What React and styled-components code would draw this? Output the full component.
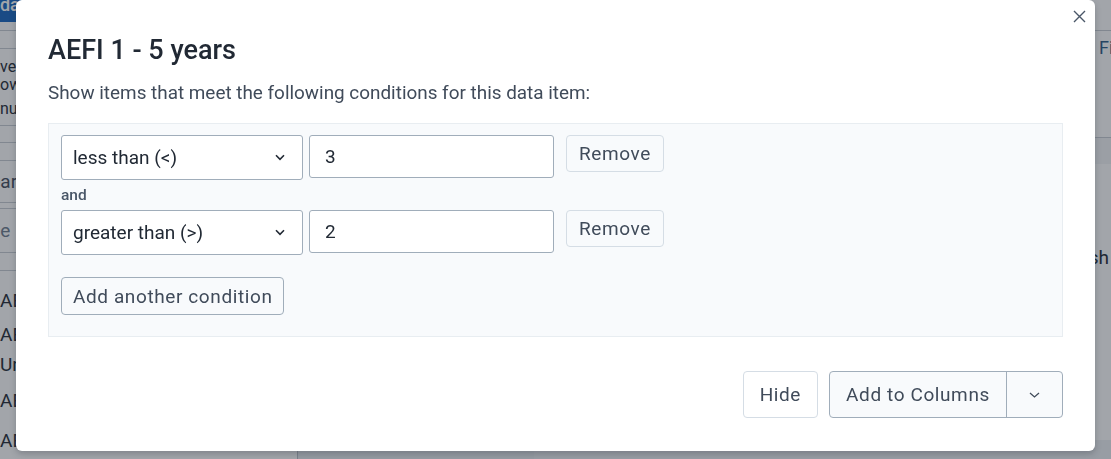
import React from "react";
import styled, { createGlobalStyle } from "styled-components";

const GlobalStyle = createGlobalStyle`
  html, body { margin: 0; padding: 0; }
  body {
    font-family: Roboto, "Noto Sans", "Liberation Sans", sans-serif;
    width: 1111px;
    height: 459px;
    overflow: hidden;
    background: #ffffff;
  }
  * { box-sizing: border-box; }
`;

/* ---------- background page ---------- */
const Page = styled.div`
  display: flex;
  width: 1111px;
  height: 459px;
  overflow: hidden;
  background: #ffffff;
  color: #212934;
`;

const Sidebar = styled.aside`
  width: 298px;
  flex-shrink: 0;
  display: flex;
  flex-direction: column;
  border-right: 1px solid #b9c0c8;
  background: #ffffff;
  overflow: hidden;
`;

const UpdateBar = styled.div`
  height: 22px;
  flex-shrink: 0;
  background: #1565c0;
  color: #ffffff;
  overflow: hidden;
  white-space: nowrap;
`;

const UpdateLabel = styled.span`
  display: block;
  margin-top: -4px;
  font-size: 18px;
  line-height: 18px;
  font-weight: 500;
  text-indent: -22px;
`;

const Band = styled.div`
  height: ${(p) => p.$h}px;
  flex-shrink: 0;
  border-bottom: 1px solid #c6ccd3;
  background: ${(p) => p.$bg || "#ffffff"};
  display: flex;
  align-items: center;
  white-space: nowrap;
  overflow: hidden;
  font-size: 19px;
  color: ${(p) => p.$color || "#212934"};
  text-indent: ${(p) => p.$indent || 0}px;
`;

const TextBlock = styled.div`
  height: 77px;
  flex-shrink: 0;
  border-bottom: 1px solid #c6ccd3;
  padding-top: 9px;
  font-size: 16px;
  line-height: 18px;
  white-space: nowrap;
  overflow: hidden;
`;

const TextLine = styled.div`
  margin-top: ${(p) => p.$gap || 0}px;
`;

const List = styled.div`
  padding-top: 17px;
  display: flex;
  flex-direction: column;
  font-size: 19px;
  white-space: nowrap;
`;

const ListItem = styled.div`
  margin-top: ${(p) => p.$gap || 0}px;
  line-height: ${(p) => p.$lh || 26}px;
`;

const MidColumn = styled.div`
  width: 236px;
  flex-shrink: 0;
  background: #e9edf1;
`;

const RightColumn = styled.div`
  flex: 1;
  display: flex;
  flex-direction: column;
  background: #ffffff;
  min-width: 0;
`;

const Toolbar = styled.div`
  height: ${(p) => p.$h}px;
  flex-shrink: 0;
  display: flex;
  justify-content: flex-end;
  align-items: ${(p) => p.$align || "flex-start"};
  border-bottom: ${(p) => (p.$border ? "1px solid #c6ccd3" : "none")};
  background: ${(p) => p.$bg || "#ffffff"};
  padding: ${(p) => p.$pad || "0"};
`;

const ToolLabel = styled.span`
  width: 12px;
  overflow: hidden;
  white-space: nowrap;
  font-size: 18px;
  color: #2b5a86;
`;

const Message = styled.span`
  white-space: nowrap;
  font-size: 19px;
  color: #212934;
  padding-right: 2px;
`;

const Spacer = styled.div`
  flex: 1;
  background: #ffffff;
`;

const BottomBand = styled.div`
  height: 19px;
  flex-shrink: 0;
  background: #eef1f4;
`;

/* ---------- modal ---------- */
const Overlay = styled.div`
  position: fixed;
  inset: 0;
  background: rgba(33, 41, 52, 0.42);
  display: flex;
  align-items: flex-start;
  padding-left: 16px;
`;

const Modal = styled.div`
  position: relative;
  width: 1079px;
  background: #ffffff;
  border-radius: 6px;
  box-shadow: 0 3px 6px rgba(33, 41, 52, 0.25);
  padding: 34px 32px 33px 32px;
  display: flex;
  flex-direction: column;
`;

const CloseButton = styled.button`
  position: absolute;
  top: 10px;
  right: 9px;
  width: 13px;
  height: 13px;
  padding: 0;
  border: none;
  background: transparent;
  display: flex;
`;

const Title = styled.h2`
  margin: 0;
  font-size: 27px;
  line-height: 32px;
  font-weight: 500;
  color: #212934;
`;

const Description = styled.p`
  margin: 15px 0 0 0;
  font-size: 18.9px;
  line-height: 24px;
  color: #404b5a;
`;

const ConditionBox = styled.div`
  margin-top: 18px;
  background: #f8fafc;
  border: 1px solid #e8edf1;
  padding: 11px 12px 21px 12px;
  display: flex;
  flex-direction: column;
  align-items: flex-start;
`;

const ConditionRow = styled.div`
  display: flex;
  align-items: flex-start;
`;

const SelectBox = styled.div`
  width: 242px;
  height: 45px;
  background: #ffffff;
  border: 1px solid #a0adba;
  border-radius: 3px;
  display: flex;
  align-items: center;
  justify-content: space-between;
  padding: 0 17px 0 11px;
  font-size: 19px;
  color: #212934;
`;

const ValueInput = styled.input`
  width: 245px;
  height: 43px;
  margin-left: 6px;
  background: #ffffff;
  border: 1px solid #a0adba;
  border-radius: 3px;
  padding: 0 15px;
  font-family: inherit;
  font-size: 19px;
  color: #212934;
  outline: none;
`;

const Button = styled.button`
  height: ${(p) => p.$h || 37}px;
  padding: 0 ${(p) => p.$px || 12}px;
  margin-left: ${(p) => p.$ml || 0}px;
  margin-top: ${(p) => p.$mt || 0}px;
  background: ${(p) => (p.$white ? "#ffffff" : "#f8fafc")};
  border: 1px solid ${(p) => (p.$strong ? "#a0adba" : "#d5dde5")};
  border-radius: 4px;
  font-family: inherit;
  font-size: 19px;
  letter-spacing: 0.6px;
  color: #404b5a;
  display: inline-flex;
  align-items: center;
  justify-content: center;
  white-space: nowrap;
`;

const AndLabel = styled.div`
  margin: 6px 0;
  height: 18px;
  font-size: 15.5px;
  line-height: 18px;
  font-weight: 500;
  color: #4a5768;
`;

const Footer = styled.div`
  margin-top: 34px;
  display: flex;
  justify-content: flex-end;
  gap: 11px;
`;

const SplitButton = styled.div`
  display: flex;
  height: 47px;
  border: 1px solid #a0adba;
  border-radius: 4px;
  background: #f8fafc;
  overflow: hidden;
`;

const SplitMain = styled.button`
  width: 177px;
  height: 100%;
  border: none;
  border-right: 1px solid #a0adba;
  background: transparent;
  font-family: inherit;
  font-size: 19px;
  letter-spacing: 0.6px;
  color: #404b5a;
  padding: 0;
`;

const SplitArrow = styled.button`
  width: 55px;
  height: 100%;
  border: none;
  background: transparent;
  display: flex;
  align-items: center;
  justify-content: center;
  padding: 0;
`;

const Chevron = () => (
  <svg width="10" height="7" viewBox="0 0 10 7" fill="none">
    <path d="M1 1.3L5 5.3L9 1.3" stroke="#212934" strokeWidth="1.6" />
  </svg>
);

const SmallChevron = () => (
  <svg width="11" height="6" viewBox="0 0 11 6" fill="none">
    <path d="M1 1L5.5 5L10 1" stroke="#404b5a" strokeWidth="1.3" />
  </svg>
);

const CloseIcon = () => (
  <svg width="13" height="13" viewBox="0 0 13 13" fill="none">
    <path d="M1 1L12 12M12 1L1 12" stroke="#4a5768" strokeWidth="1.4" />
  </svg>
);

const conditions = [
  { op: "less than (<)", value: "3" },
  { op: "greater than (>)", value: "2" },
];

export default function App() {
  return (
    <>
      <GlobalStyle />
      <Page>
        <Sidebar>
          <UpdateBar>
            <UpdateLabel>Update</UpdateLabel>
          </UpdateBar>
          <Band $h={9} />
          <Band $h={18} />
          <TextBlock>
            <TextLine>very</TextLine>
            <TextLine>own</TextLine>
            <TextLine $gap={6}>num</TextLine>
          </TextBlock>
          <Band $h={17} />
          <Band $h={18} />
          <Band $h={42} $indent={-21} $color="#404b5a">Search</Band>
          <Band $h={6} />
          <Band $h={44} $indent={-30} $color="#6b7a8c">Type</Band>
          <Band $h={18} />
          <List>
            <ListItem>AEFI</ListItem>
            <ListItem $gap={6} $lh={30}>
              AEFI
              <br />
              Unk
            </ListItem>
            <ListItem $gap={8}>AEFI</ListItem>
            <ListItem $gap={14}>AEFI</ListItem>
          </List>
        </Sidebar>
        <MidColumn />
        <RightColumn>
          <Toolbar $h={31} $border />
          <Toolbar $h={107} $border $pad="6px 0 0 0">
            <ToolLabel>Fields</ToolLabel>
          </Toolbar>
          <Toolbar $h={26} $bg="#f3f5f7" />
          <Toolbar $h={186} $align="center">
            <Message>refresh</Message>
          </Toolbar>
          <Spacer />
          <BottomBand />
        </RightColumn>
      </Page>

      <Overlay>
        <Modal>
          <CloseButton aria-label="Close">
            <CloseIcon />
          </CloseButton>
          <Title>AEFI 1 - 5 years</Title>
          <Description>
            Show items that meet the following conditions for this data item:
          </Description>
          <ConditionBox>
            {conditions.map((c, i) => (
              <React.Fragment key={i}>
                {i > 0 && <AndLabel>and</AndLabel>}
                <ConditionRow>
                  <SelectBox>
                    <span>{c.op}</span>
                    <Chevron />
                  </SelectBox>
                  <ValueInput defaultValue={c.value} />
                  <Button $ml={12} $px={12}>
                    Remove
                  </Button>
                </ConditionRow>
              </React.Fragment>
            ))}
            <Button $strong $h={38} $mt={22} $px={11}>
              Add another condition
            </Button>
          </ConditionBox>
          <Footer>
            <Button $white $h={47} $px={16}>
              Hide
            </Button>
            <SplitButton>
              <SplitMain>Add to Columns</SplitMain>
              <SplitArrow aria-label="More">
                <SmallChevron />
              </SplitArrow>
            </SplitButton>
          </Footer>
        </Modal>
      </Overlay>
    </>
  );
}
